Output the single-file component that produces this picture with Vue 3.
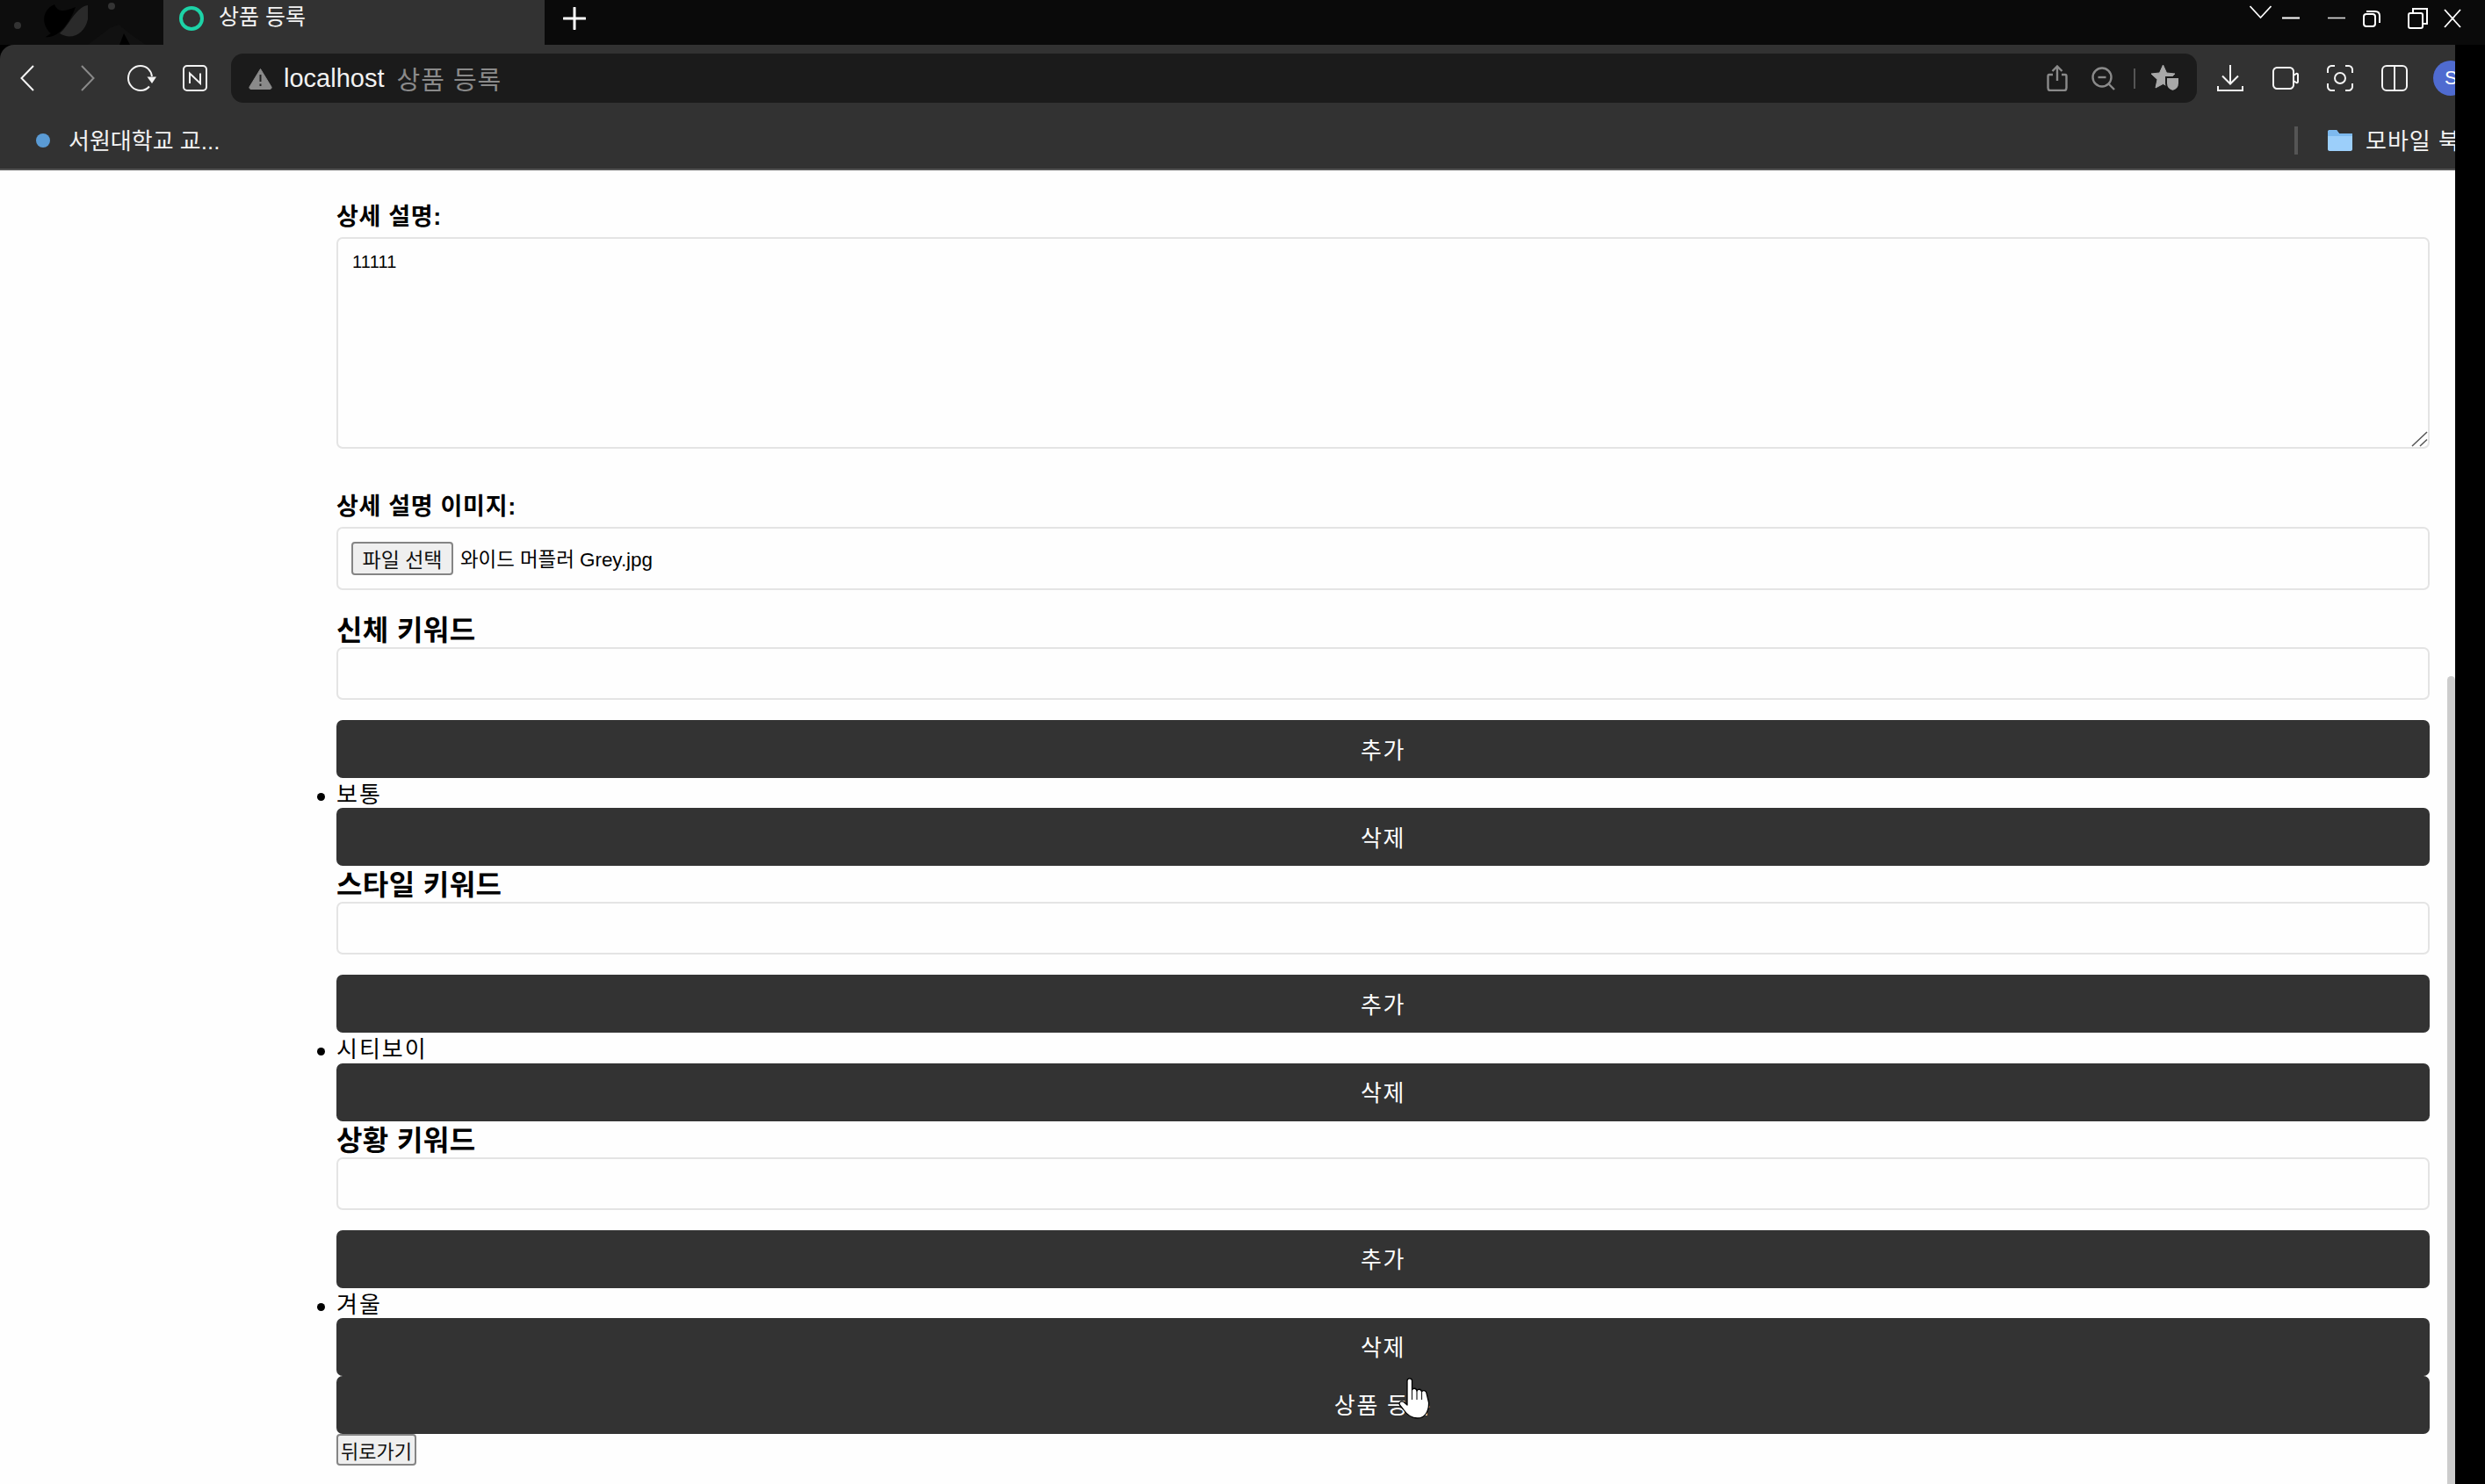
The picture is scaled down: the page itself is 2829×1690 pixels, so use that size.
<template>
  <div class="window">
    <div class="tabstrip">
      <svg class="wallpaper" width="186" height="51" viewBox="0 0 186 51">
        <rect width="186" height="51" fill="#0d0d0d" />
        <circle cx="20" cy="29" r="4" fill="#333" />
        <circle cx="127" cy="7" r="4" fill="#333" />
        <path d="M100 6C86 8 78 30 68 38C80 46 96 40 100 22Z" fill="#2a2a2a" />
        <path d="M62 5C46 12 48 30 58 38L52 42C64 44 78 30 86 8C76 12 66 16 62 5Z" fill="#000" />
        <path d="M100 51L125 32L135 28L150 40L166 51Z" fill="#111" />
        <path d="M136 51L141 38L148 51Z" fill="#000" />
      </svg>
      <div class="tab">
        <span class="tab-dot"></span>
        <span class="tab-title">상품 등록</span>
      </div>
      <svg class="new-tab" width="26" height="26" viewBox="0 0 26 26">
        <path d="M13 1V25M1 13H25" stroke="#fff" stroke-width="3" stroke-linecap="round" />
      </svg>
      <div class="win-controls">
        <svg class="wc-chevron" width="25" height="40" viewBox="0 0 25 40"><path d="M0.5 7L12.5 20L24.5 7" fill="none" stroke="#fff" stroke-width="1.6" /></svg>
        <svg class="wc-min" width="20" height="40" viewBox="0 0 20 40"><path d="M0 20.5H20" stroke="#fff" stroke-width="2" /></svg>
        <svg class="wc-min2" width="20" height="40" viewBox="0 0 20 40"><path d="M0 20.5H20" stroke="#ddd" stroke-width="1.6" /></svg>
        <svg class="wc-rest" width="20" height="40" viewBox="0 0 20 40">
          <rect x="1" y="16" width="13" height="14" rx="3" fill="none" stroke="#fff" stroke-width="2" />
          <path d="M4 13H14C17 13 19 15 19 18V26" fill="none" stroke="#fff" stroke-width="2" />
        </svg>
        <svg class="wc-max" width="23" height="40" viewBox="0 0 23 40">
          <rect x="1" y="15" width="16" height="17" rx="2" fill="none" stroke="#fff" stroke-width="2" />
          <path d="M6 15V10H22V27H17" fill="none" stroke="#fff" stroke-width="2" />
        </svg>
        <svg class="wc-close" width="20" height="40" viewBox="0 0 20 40"><path d="M1 11L19 31M19 11L1 31" stroke="#fff" stroke-width="1.8" /></svg>
      </div>
    </div>

    <div class="main">
      <div class="toolbar">
        <svg width="16" height="30" viewBox="0 0 16 30"><path d="M15 1L1.5 15L15 29" fill="none" stroke="#f4f4f4" stroke-width="2" /></svg>
        <svg class="tb-forward" width="16" height="30" viewBox="0 0 16 30"><path d="M1 1L14.5 15L1 29" fill="none" stroke="#8a8a8a" stroke-width="2" /></svg>
        <svg class="tb-reload" width="33" height="30" viewBox="0 0 33 30">
          <path d="M25 24.5C22.500 27.500 19 29 15 29C7.300 29 1 22.700 1 15C1 7.300 7.300 1 15 1C22 1 27 6 28 13" fill="none" stroke="#f4f4f4" stroke-width="2" />
          <path d="M22.500 13.500H33L28 21Z" fill="#f4f4f4" />
        </svg>
        <svg class="tb-notion" width="28" height="30" viewBox="0 0 28 30">
          <rect x="1" y="1" width="26" height="28" rx="4" fill="none" stroke="#f4f4f4" stroke-width="2" />
          <path d="M8 21V9.500L20 21V9.500" fill="none" stroke="#f4f4f4" stroke-width="2" />
        </svg>

        <div class="address">
          <svg width="27" height="25" viewBox="0 0 27 25">
            <path d="M13.500 1.500L26 22C26.500 23.500 25.500 24.500 24 24.500H3C1.500 24.500 0.500 23.500 1 22Z" fill="#8a8a8a" stroke="#8a8a8a" stroke-linejoin="round" />
            <path d="M13.500 8V16M13.500 18.500V21" stroke="#222" stroke-width="2" />
          </svg>
          <span class="host">localhost</span>
          <span class="page-title">상품 등록</span>
          <div class="address-icons">
            <svg width="24" height="30" viewBox="0 0 24 30">
              <path d="M12 18V2M6.500 7L12 1.500L17.500 7" fill="none" stroke="#8a8a8a" stroke-width="2.400" />
              <path d="M7 11H3C2 11 1.500 12 1.500 13V26C1.500 28 2.500 29 4 29H20C21.500 29 22.500 28 22.500 26V13C22.500 12 22 11 21 11H17" fill="none" stroke="#8a8a8a" stroke-width="2.400" />
            </svg>
            <svg class="ai-zoom" width="27" height="27" viewBox="0 0 27 27">
              <circle cx="12" cy="12" r="10.500" fill="none" stroke="#8a8a8a" stroke-width="2.400" />
              <path d="M7.500 12H16.500" stroke="#8a8a8a" stroke-width="2.400" />
              <path d="M19.500 19.500L26 26" stroke="#8a8a8a" stroke-width="2.400" />
            </svg>
            <span class="ai-sep"></span>
            <svg class="ai-star" width="32" height="30" viewBox="0 0 32 30">
              <path d="M13.500 0L17.500 9L27 10L20 16.500L22 26L13.500 21.500L5 26L7 16.500L0 10L9.500 9Z" fill="#a8a8a8" stroke="#a8a8a8" stroke-linejoin="round" />
              <path d="M17 14H32V21C32 26 28 29 24.500 30C21 29 17 26 17 21Z" fill="#a8a8a8" stroke="#1a1a1a" stroke-width="2" />
            </svg>
          </div>
        </div>

        <svg class="tb-download" width="30" height="30" viewBox="0 0 30 30">
          <path d="M15 0V21M6 12.500L15 21.500L24 12.500" fill="none" stroke="#f4f4f4" stroke-width="2" />
          <path d="M1 24V29H29V24" fill="none" stroke="#f4f4f4" stroke-width="2" />
        </svg>
        <svg class="tb-video" width="30" height="26" viewBox="0 0 30 26">
          <path d="M5 1H20C22 1 24 3 24 5V21C24 23 22 25 20 25H5C3 25 1 23 1 21V5C1 3 3 1 5 1Z" fill="none" stroke="#f4f4f4" stroke-width="2" />
          <path d="M24 10L27 8C28 7.500 29 8 29 9V17C29 18 28 18.500 27 18L24 16" fill="none" stroke="#f4f4f4" stroke-width="2" />
        </svg>
        <svg class="tb-shot" width="30" height="30" viewBox="0 0 30 30">
          <path d="M9 1H5C3 1 1 3 1 5V9M21 1H25C27 1 29 3 29 5V9M9 29H5C3 29 1 27 1 25V21M21 29H25C27 29 29 27 29 25V21" fill="none" stroke="#f4f4f4" stroke-width="2" />
          <circle cx="15" cy="15" r="6" fill="none" stroke="#f4f4f4" stroke-width="2" />
        </svg>
        <svg class="tb-split" width="30" height="30" viewBox="0 0 30 30">
          <rect x="1" y="1" width="28" height="28" rx="5" fill="none" stroke="#f4f4f4" stroke-width="2" />
          <path d="M15 1V29" stroke="#f4f4f4" stroke-width="2" />
        </svg>
        <div class="avatar">S</div>
      </div>

      <div class="bookmarks">
        <div class="bm-left">
          <span class="bm-dot"></span>
          <span class="bm-text">서원대학교 교...</span>
        </div>
        <span class="bm-sep"></span>
        <svg class="bm-folder" width="28" height="24" viewBox="0 0 28 24">
          <path d="M0 2C0 1 1 0 2 0H10L13 4H26C27 4 28 5 28 6V22C28 23 27 24 26 24H2C1 24 0 23 0 22Z" fill="#9ccffa" />
          <path d="M0 2C0 1 1 0 2 0H10L13 4H28V7H0Z" fill="#7db9ee" />
        </svg>
        <span class="bm-folder-text">모바일 북마크</span>
      </div>

      <div class="page">
        <div class="content">
          <label class="field-label">상세 설명:</label>
          <div class="desc-wrap">
            <textarea class="desc" readonly :value="description"></textarea>
            <svg class="resizer" width="19" height="18" viewBox="0 0 19 18">
              <path d="M1 17L18 1M10 17L18 9.500" stroke="#555" stroke-width="1.500" />
            </svg>
          </div>

          <label class="field-label">상세 설명 이미지:</label>
          <div class="file-box">
            <button class="file-btn" type="button">파일 선택</button>
            <span class="file-name">와이드 머플러 Grey.jpg</span>
          </div>

          <section v-for="group in keywordGroups" :key="group.title" class="keyword-group">
            <h3>{{ group.title }}</h3>
            <input class="keyword-input" type="text" />
            <button class="dark-btn add-btn" type="button">추가</button>
            <ul>
              <li v-for="item in group.items" :key="item">
                <span class="keyword-name">{{ item }}</span>
                <button class="dark-btn" type="button">삭제</button>
              </li>
            </ul>
          </section>

          <button class="dark-btn" type="button">상품 등록</button>
          <button class="back-btn" type="button">뒤로가기</button>

          <svg class="cursor" width="36" height="47" viewBox="0 0 36 47">
            <path d="M10 3.500C10 0 15.500 0 15.500 3.500V14C16.500 11.500 20.500 11.500 21 15C22 12.500 26 12.500 26.500 16C27.500 14 31.500 14 32 17.500L34.500 28C35 38 30.500 46 21.500 46C14.500 46 10 42.500 5.500 36L1.500 31C0 28 3 26 6 27.500L10 31Z" fill="#fff" stroke="#000" stroke-width="1.300" stroke-linejoin="round" />
            <path d="M15.500 14V25M21 15V25M26.500 16V25" stroke="#222" stroke-width="1.200" />
          </svg>
        </div>
        <div class="scrollbar"><div class="thumb"></div></div>
      </div>
    </div>
  </div>
</template>

<script setup>
const description = '11111'

const keywordGroups = [
  { title: '신체 키워드', items: ['보통'] },
  { title: '스타일 키워드', items: ['시티보이'] },
  { title: '상황 키워드', items: ['겨울'] }
]
</script>

<style scoped>
.window {
  width: 2829px;
  height: 1690px;
  background: #000;
  overflow: hidden;
  font-family: "Liberation Sans", "Noto Sans CJK KR", sans-serif;
  position: relative;
}

.tabstrip {
  display: flex;
  height: 51px;
  background: #0a0a0a;
  padding-right: 27px;
  box-sizing: border-box;
}

.wallpaper {
  flex-shrink: 0;
}

.tab {
  width: 434px;
  background: #323232;
  display: flex;
  align-items: flex-start;
  padding: 7px 0 0 18px;
  box-sizing: border-box;
}

.tab-dot {
  width: 28px;
  height: 28px;
  border: 4px solid #1dd3a7;
  border-radius: 50%;
  box-sizing: border-box;
}

.tab-title {
  margin-left: 17px;
  margin-top: -5px;
  font-size: 25px;
  line-height: 34px;
  color: #f2f2f2;
}

.new-tab {
  margin: 8px 0 0 21px;
}

.win-controls {
  margin-left: auto;
  display: flex;
  align-items: flex-start;
}

.wc-min { margin-left: 12px; }
.wc-min2 { margin-left: 32px; }
.wc-rest { margin-left: 20px; }
.wc-max { margin-left: 31px; }
.wc-close { margin-left: 18px; }

.main {
  width: 2795px;
  overflow: hidden;
}

.toolbar {
  height: 66px;
  background: #323232;
  border-radius: 16px 0 0 0;
  display: flex;
  align-items: center;
  padding: 10px 0 0 23px;
  box-sizing: border-box;
}

.toolbar svg {
  flex-shrink: 0;
}

.tb-forward { margin-left: 53px; }
.tb-reload { margin-left: 37px; }
.tb-notion { margin-left: 30px; }

.address {
  width: 2238px;
  height: 56px;
  margin-left: 27px;
  background: #1b1b1b;
  border-radius: 14px;
  display: flex;
  align-items: center;
  padding: 0 20px 0 20px;
  box-sizing: border-box;
  flex-shrink: 0;
}

.host {
  margin-left: 13px;
  font-size: 29px;
  color: #f2f2f2;
}

.page-title {
  margin-left: 14px;
  font-size: 29px;
  letter-spacing: 1px;
  color: #8a8a8a;
}

.address-icons {
  margin-left: auto;
  display: flex;
  align-items: center;
}

.ai-zoom { margin-left: 27px; }
.ai-sep {
  width: 2px;
  height: 23px;
  margin-left: 21px;
  background: #555;
}
.ai-star { margin-left: 18px; }

.tb-download { margin-left: 23px; }
.tb-video { margin-left: 33px; }
.tb-shot { margin-left: 32px; }
.tb-split { margin-left: 32px; }

.avatar {
  width: 40px;
  height: 40px;
  margin-left: 29px;
  flex-shrink: 0;
  border-radius: 50%;
  background: #4f6bd0;
  color: #fff;
  font-size: 22px;
  line-height: 40px;
  padding-left: 13px;
  box-sizing: border-box;
}

.bookmarks {
  height: 77px;
  background: #323232;
  border-bottom: 2px solid #555;
  display: flex;
  align-items: center;
  padding: 10px 0 0 41px;
  box-sizing: border-box;
}

.bm-left {
  width: 2571px;
  flex-shrink: 0;
  display: flex;
  align-items: center;
}

.bm-dot {
  width: 16px;
  height: 16px;
  border-radius: 50%;
  background: #5a9bd5;
  flex-shrink: 0;
}

.bm-text {
  margin-left: 21px;
  margin-top: -2px;
  font-size: 26px;
  color: #f2f2f2;
  white-space: nowrap;
}

.bm-sep {
  width: 4px;
  height: 32px;
  background: #555;
  flex-shrink: 0;
}

.bm-folder {
  margin-left: 34px;
  flex-shrink: 0;
}

.bm-folder-text {
  margin-left: 15px;
  margin-top: -2px;
  font-size: 26px;
  letter-spacing: 1px;
  color: #f2f2f2;
  white-space: nowrap;
  flex-shrink: 0;
}

.page {
  height: 1496px;
  background: #fefefe;
  display: flex;
}

.content {
  flex: 1;
  position: relative;
  padding: 35px 20px 0 383px;
  box-sizing: border-box;
  color: #000;
  font-size: 26px;
}

.field-label {
  display: block;
  font-size: 27px;
  letter-spacing: 0.7px;
  font-weight: 700;
  line-height: 32px;
  margin-bottom: 9px;
  padding-top: 2px;
  height: 32px;
  box-sizing: border-box;
}

.desc-wrap {
  position: relative;
  margin-bottom: 48px;
}

.desc {
  display: block;
  width: 100%;
  height: 241px;
  padding: 15px 16px;
  box-sizing: border-box;
  border: 2px solid #e4e4e4;
  border-radius: 7px;
  background: #fefefe;
  font-family: "Liberation Sans", sans-serif;
  font-size: 20px;
  letter-spacing: 0.2px;
  outline: none;
  resize: none;
}

.resizer {
  position: absolute;
  right: 2px;
  bottom: 2px;
}

.file-box {
  height: 72px;
  margin-bottom: 24px;
  padding: 0 15px;
  box-sizing: border-box;
  border: 2px solid #e4e4e4;
  border-radius: 7px;
  display: flex;
  align-items: center;
}

.file-btn {
  width: 116px;
  height: 38px;
  padding: 0;
  background: #efefef;
  border: 2px solid #858585;
  border-radius: 4px;
  font-family: inherit;
  font-size: 23px;
  color: #111;
}

.file-name {
  margin-left: 8px;
  margin-top: -2px;
  font-size: 22.400px;
}

.keyword-group {
  padding-top: 4px;
}

.keyword-group h3 {
  margin: 0 0 1px;
  font-size: 32px;
  letter-spacing: 0.4px;
  line-height: 36px;
  font-weight: 700;
}

.keyword-input {
  display: block;
  width: 100%;
  height: 60px;
  margin-bottom: 23px;
  box-sizing: border-box;
  border: 2px solid #e4e4e4;
  border-radius: 7px;
  background: #fefefe;
  outline: none;
}

.dark-btn {
  display: block;
  width: 100%;
  height: 66px;
  padding: 0 0 2px;
  border: none;
  border-radius: 7px;
  background: #333;
  color: #fff;
  font-family: inherit;
  font-size: 26px;
  letter-spacing: 1.700px;
}

.keyword-group ul {
  margin: 0;
  padding: 0;
  list-style: none;
}

.keyword-group li {
  position: relative;
}

.keyword-group li::before {
  content: "";
  position: absolute;
  left: -22px;
  top: 17px;
  width: 9px;
  height: 9px;
  border-radius: 50%;
  background: #000;
}

.keyword-name {
  display: block;
  height: 34.300px;
  line-height: 38px;
  letter-spacing: 2px;
}

.back-btn {
  display: block;
  width: 91px;
  height: 36px;
  padding: 0 0 2px;
  background: #efefef;
  border: 2px solid #858585;
  border-radius: 4px;
  font-family: inherit;
  font-size: 22px;
  white-space: nowrap;
  color: #111;
}

.cursor {
  position: absolute;
  left: 1592px;
  top: 1375px;
}

.scrollbar {
  width: 9px;
  flex-shrink: 0;
  padding-top: 576px;
  box-sizing: border-box;
}

.thumb {
  height: 100%;
  background: #ccc;
  border-radius: 5px 5px 0 0;
}
</style>

<style>
html, body {
  margin: 0;
  overflow: hidden;
}
</style>
